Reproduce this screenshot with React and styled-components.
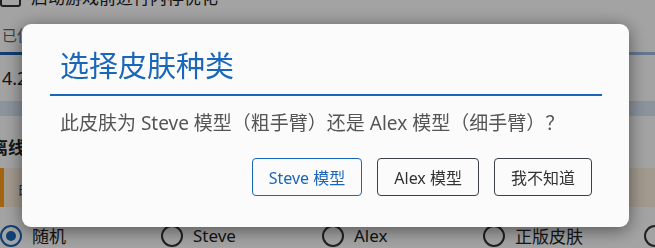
import React from 'react';
import styled, { createGlobalStyle } from 'styled-components';

const GlobalStyle = createGlobalStyle`
  html, body {
    margin: 0;
    padding: 0;
    width: 655px;
    height: 248px;
    overflow: hidden;
    background: #ffffff;
    font-family: "Noto Sans", "Noto Sans CJK SC", sans-serif;
  }
`;

const Page = styled.div`
  width: 655px;
  height: 248px;
  overflow: hidden;
  display: flex;
  flex-direction: column;
  color: #222;
`;

const CheckRow = styled.div`
  margin-top: -14px;
  height: 21px;
  display: flex;
  align-items: center;
  gap: 10px;
  font-size: 17px;
`;

const CheckBox = styled.span`
  width: 17px;
  height: 17px;
  border: 2px solid #333;
  border-radius: 3px;
`;

const MemText = styled.div`
  margin-top: 17px;
  margin-left: 2px;
  font-size: 15px;
  line-height: 22px;
  color: #666;
`;

const MemBar = styled.div`
  margin-top: 6px;
  height: 3px;
  display: flex;
  background: #9dbbe0;
`;

const MemUsed = styled.div`
  width: 45%;
  background: #1c5fb0;
`;

const ValueField = styled.div`
  height: 47px;
  display: flex;
  align-items: center;
  padding-left: 2px;
  font-size: 18px;
  color: #222;
`;

const Band = styled.div`
  height: 16px;
  background: #d9e6f4;
`;

const Heading = styled.div`
  margin-top: 23px;
  margin-left: -9px;
  font-size: 17px;
  font-weight: 700;
  line-height: 18px;
`;

const Warning = styled.div`
  margin-top: 11px;
  height: 40px;
  display: flex;
  align-items: center;
  padding-left: 14px;
  border-left: 4px solid #ff9d1a;
  background: #fff1e0;
  font-size: 14px;
  color: #444;
`;

const RadioRow = styled.div`
  margin-top: 16px;
  display: flex;
`;

const RadioItem = styled.label`
  width: 161px;
  flex-shrink: 0;
  display: flex;
  align-items: center;
  gap: 10px;
  font-size: 17px;
  color: #222;
`;

const RadioCircle = styled.span`
  width: 18px;
  height: 18px;
  border-radius: 50%;
  border: 2px solid ${p => (p.$on ? '#1a66b8' : '#333')};
  display: flex;
  align-items: center;
  justify-content: center;
  &::after {
    content: '';
    width: 10px;
    height: 10px;
    border-radius: 50%;
    background: ${p => (p.$on ? '#1a66b8' : 'transparent')};
  }
`;

const Overlay = styled.div`
  position: fixed;
  inset: 0;
  background: rgba(0, 0, 0, 0.36);
  display: flex;
  align-items: flex-start;
  padding: 24px 0 0 22px;
`;

const Dialog = styled.div`
  width: 607px;
  height: 203px;
  box-sizing: border-box;
  background: #fbfbfb;
  border-radius: 9px;
  box-shadow: 0 3px 18px rgba(0, 0, 0, 0.5);
  padding: 25px 37px 0 38px;
  display: flex;
  flex-direction: column;
`;

const Title = styled.div`
  font-size: 29px;
  line-height: 34px;
  color: #1a66b8;
`;

const Rule = styled.div`
  margin: 11px -10px 0;
  height: 2px;
  background: #1a66b8;
`;

const Body = styled.div`
  margin-top: 15px;
  font-size: 19px;
  line-height: 24px;
  color: #555;
`;

const Actions = styled.div`
  margin-top: 23px;
  display: flex;
  justify-content: flex-end;
  gap: 15px;
`;

const Button = styled.button`
  height: 38px;
  padding: 0 16px;
  box-sizing: border-box;
  border-radius: 4px;
  background: #fbfbfb;
  font-family: inherit;
  font-size: 16px;
  border: 1px solid ${p => (p.$primary ? '#1a66b8' : '#3b4046')};
  color: ${p => (p.$primary ? '#1a66b8' : '#333')};
`;

const radios = [
  { label: '随机', on: true },
  { label: 'Steve' },
  { label: 'Alex' },
  { label: '正版皮肤' },
  { label: '自定义' },
];

export default function App() {
  return (
    <>
      <GlobalStyle />
      <Page>
        <CheckRow>
          <CheckBox />
          <span>启动游戏前进行内存优化</span>
        </CheckRow>
        <MemText>已使用 3.4 GB / 总内存 7.6 GB</MemText>
        <MemBar>
          <MemUsed />
        </MemBar>
        <ValueField>4.2 GB</ValueField>
        <Band />
        <Heading>离线皮肤</Heading>
        <Warning>由于 Mojang 限制，离线皮肤仅在本地可见</Warning>
        <RadioRow>
          {radios.map(r => (
            <RadioItem key={r.label}>
              <RadioCircle $on={r.on} />
              {r.label}
            </RadioItem>
          ))}
        </RadioRow>
      </Page>
      <Overlay>
        <Dialog>
          <Title>选择皮肤种类</Title>
          <Rule />
          <Body>此皮肤为 Steve 模型（粗手臂）还是 Alex 模型（细手臂）？</Body>
          <Actions>
            <Button $primary>Steve 模型</Button>
            <Button>Alex 模型</Button>
            <Button>我不知道</Button>
          </Actions>
        </Dialog>
      </Overlay>
    </>
  );
}
